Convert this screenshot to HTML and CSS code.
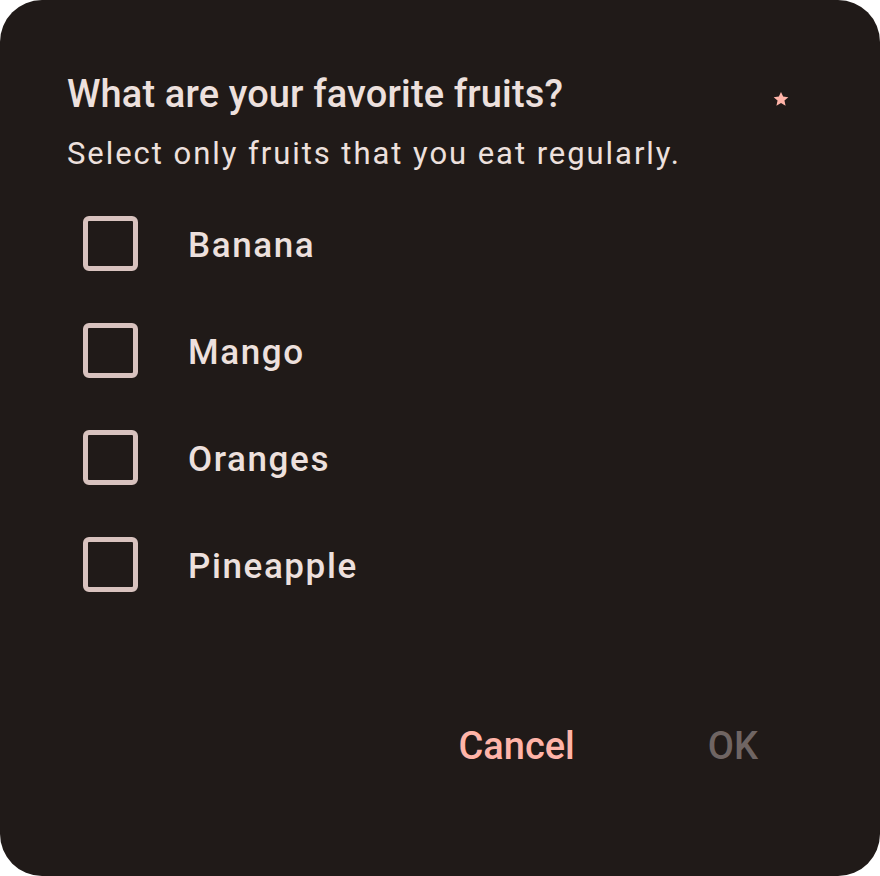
FILE: index.html
```html
<!DOCTYPE html>
<html>
<head>
<meta charset="utf-8">
<link rel="stylesheet" href="styles.css">
</head>
<body>
<div class="dialog">
  <div class="title-row">
    <h1 class="title">What are your favorite fruits?</h1>
    <svg class="star" width="18" height="18" viewBox="0 0 24 24"><path fill="#ffb4a8" d="M12 2.5l2.9 6.3 6.9.7-5.2 4.6 1.5 6.8L12 17.4l-6.1 3.5 1.5-6.8-5.2-4.6 6.9-.7z"/></svg>
  </div>
  <p class="subtitle">Select only fruits that you eat regularly.</p>
  <div class="options">
    <label class="option"><span class="box"></span><span class="label">Banana</span></label>
    <label class="option"><span class="box"></span><span class="label">Mango</span></label>
    <label class="option"><span class="box"></span><span class="label">Oranges</span></label>
    <label class="option"><span class="box"></span><span class="label">Pineapple</span></label>
  </div>
  <div class="actions">
    <span class="btn cancel">Cancel</span>
    <span class="btn ok">OK</span>
  </div>
</div>
</body>
</html>
```
FILE: styles.css
```css
html, body {
  margin: 0;
  padding: 0;
  background: #ffffff;
}
body {
  font-family: Roboto, "Liberation Sans", sans-serif;
}
.dialog {
  width: 880px;
  height: 876px;
  box-sizing: border-box;
  background: #201a18;
  border-radius: 42px;
  padding: 70px 0 0 67px;
  display: flex;
  flex-direction: column;
  color: #ede0dd;
}
.title-row {
  display: flex;
  align-items: flex-start;
  justify-content: space-between;
  padding-right: 90px;
}
.title {
  margin: 0;
  font-size: 38px;
  line-height: 48px;
  font-weight: 500;
  letter-spacing: 0.13px;
}
.star {
  margin-top: 20px;
}
.subtitle {
  margin: 16px 0 0 0;
  font-size: 31px;
  line-height: 40px;
  font-weight: 400;
  letter-spacing: 1.95px;
}
.options {
  margin-top: 16px;
  display: flex;
  flex-direction: column;
  padding-left: 16px;
}
.option {
  height: 107px;
  display: flex;
  align-items: center;
}
.box {
  width: 55px;
  height: 55px;
  box-sizing: border-box;
  border: 5px solid #d8c2be;
  border-radius: 6px;
  flex: none;
}
.label {
  margin-left: 50px;
  margin-top: 5px;
  font-size: 35px;
  line-height: 48px;
  font-weight: 500;
  letter-spacing: 1.6px;
}
.actions {
  margin-top: 104px;
  display: flex;
  justify-content: flex-end;
  padding-right: 122px;
  gap: 133px;
}
.btn {
  font-size: 38px;
  line-height: 48px;
  font-weight: 500;
}
.cancel {
  color: #ffb4a8;
}
.ok {
  color: #6f6563;
}
```
